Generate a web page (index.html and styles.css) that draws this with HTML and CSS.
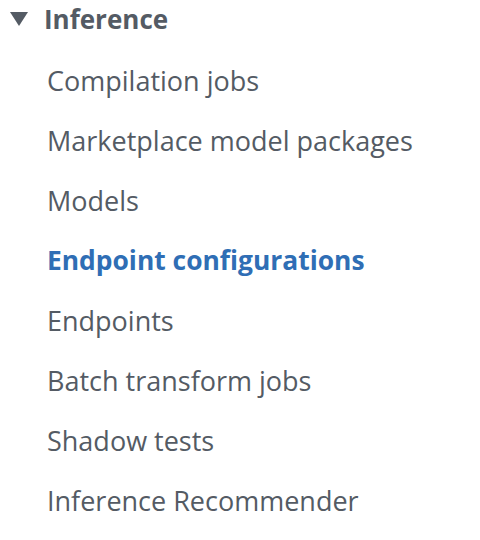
FILE: index.html
```html
<!DOCTYPE html>
<html lang="en">
<head>
    <meta charset="UTF-8">
    <meta name="viewport" content="width=device-width, initial-scale=1.0">
    <title>Inference navigation</title>
    <link rel="stylesheet" href="styles.css">
</head>
<body>
    <nav class="nav-section">
        <div class="section-header">
            <svg class="caret" width="18" height="14" viewBox="0 0 18 14">
                <polygon points="0,0 18,0 9,14" fill="#545b64"/>
            </svg>
            <span class="section-title">Inference</span>
        </div>
        <ul class="nav-list">
            <li><a href="#">Compilation jobs</a></li>
            <li><a href="#">Marketplace model packages</a></li>
            <li><a href="#">Models</a></li>
            <li><a href="#" class="active">Endpoint configurations</a></li>
            <li><a href="#">Endpoints</a></li>
            <li><a href="#">Batch transform jobs</a></li>
            <li><a href="#">Shadow tests</a></li>
            <li><a href="#">Inference Recommender</a></li>
        </ul>
    </nav>
</body>
</html>
```

FILE: styles.css
```css
body {
    margin: 0;
    background: #ffffff;
    font-family: "Open Sans", Arial, sans-serif;
    color: #545b64;
}

.nav-section {
    padding: 0 0 0 10px;
}

.section-header {
    display: flex;
    align-items: center;
    gap: 16px;
    height: 38px;
}

.section-title {
    font-size: 26px;
    font-weight: 700;
}

.nav-list {
    list-style: none;
    margin: 0;
    padding: 0 0 0 37px;
}

.nav-list li {
    height: 60px;
    display: flex;
    align-items: center;
}

.nav-list li:first-child {
    margin-top: 12px;
}

.nav-list a {
    font-size: 27px;
    color: #545b64;
    text-decoration: none;
}

.nav-list a.active {
    font-size: 26.4px;
    color: #2f6eb5;
    font-weight: 700;
}
```
